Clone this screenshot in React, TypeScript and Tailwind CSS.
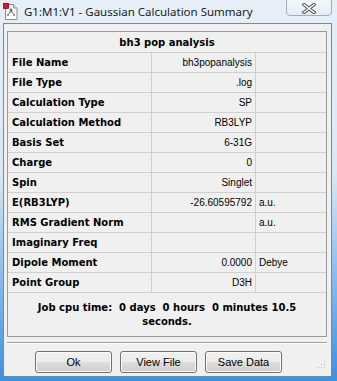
import React from 'react'

const rows = [
  { label: 'File Name', value: 'bh3popanalysis', unit: '' },
  { label: 'File Type', value: '.log', unit: '' },
  { label: 'Calculation Type', value: 'SP', unit: '' },
  { label: 'Calculation Method', value: 'RB3LYP', unit: '' },
  { label: 'Basis Set', value: '6-31G', unit: '' },
  { label: 'Charge', value: '0', unit: '' },
  { label: 'Spin', value: 'Singlet', unit: '' },
  { label: 'E(RB3LYP)', value: '-26.60595792', unit: 'a.u.' },
  { label: 'RMS Gradient Norm', value: '', unit: 'a.u.' },
  { label: 'Imaginary Freq', value: '', unit: '' },
  { label: 'Dipole Moment', value: '0.0000', unit: 'Debye' },
  { label: 'Point Group', value: 'D3H', unit: '' },
]

const GaussIcon = () => (
  <svg width="16" height="17" viewBox="0 0 16 17">
    <path d="M2.5 1.5h8l3.5 3.5v11.5h-11.5z" fill="#fff" stroke="#8c8c8c" />
    <path d="M10.5 1.5v3.5h3.5" fill="#e6e6e6" stroke="#8c8c8c" />
    <line x1="8" y1="7" x2="5" y2="12" stroke="#777" strokeWidth="1" />
    <line x1="8" y1="7" x2="11" y2="12" stroke="#777" strokeWidth="1" />
    <line x1="8" y1="7" x2="8" y2="10" stroke="#777" strokeWidth="1" />
    <circle cx="8" cy="7" r="1.4" fill="#6b6b6b" />
    <circle cx="5" cy="12" r="1.2" fill="#9a9a9a" />
    <circle cx="11" cy="12" r="1.2" fill="#9a9a9a" />
    <rect x="0" y="0" width="5.5" height="5.5" fill="#e0141e" stroke="#8a0a10" strokeWidth="0.8" />
  </svg>
)

const Btn = ({ children }: { children: React.ReactNode }) => (
  <button className="w-[77px] h-[22px] rounded-[3px] border border-[#707070] bg-[linear-gradient(to_bottom,#f2f2f2_0%,#ebebeb_48%,#dddddd_52%,#cfcfcf_100%)] text-[11px] text-black shadow-[inset_0_0_0_1px_#fcfcfc]">
    {children}
  </button>
)

export default function App() {
  return (
    <div className="relative w-[337px] h-[381px] overflow-hidden bg-[linear-gradient(to_bottom,#e6eff8_0%,#dbe8f4_45%,#8ec0ec_70%,#3f8fdc_100%)] font-['Liberation_Sans',Arial,sans-serif]">
      {/* title bar */}
      <div className="flex items-center h-[23px] pl-[3px]">
        <GaussIcon />
        <span className="ml-[5px] text-[11.5px] text-[#1b1b1b] font-['Noto_Sans',sans-serif] leading-none">
          G1:M1:V1 - Gaussian Calculation Summary
        </span>
      </div>
      <div className="absolute top-[-2px] right-[5px] w-[46px] h-[18px] rounded-b-[4px] border border-[#9fadbd] bg-[linear-gradient(to_bottom,#f4f8fb,#e3ecf4)] flex items-center justify-center">
        <svg width="14" height="11" viewBox="0 0 14 11" className="mt-[2px]">
          <path d="M2 1.5L12 9.5M12 1.5L2 9.5" stroke="#4a4a4a" strokeWidth="3.4" strokeLinecap="square" />
          <path d="M2 1.5L12 9.5M12 1.5L2 9.5" stroke="#ffffff" strokeWidth="1.6" strokeLinecap="square" />
        </svg>
      </div>

      {/* client area */}
      <div className="relative ml-[3px] w-[329px] h-[354px] border border-[#7d8b99] bg-[#f0f0f0]">
        <div className="ml-[3px] mt-[7px] w-[320px] border border-[#9a9a9a]">
          <div className="h-[21px] flex items-center justify-center border-b border-[#d0d0d0] text-[10px] font-bold font-['DejaVu_Sans',sans-serif] text-black">
            bh3 pop analysis
          </div>
          {rows.map((r) => (
            <div
              key={r.label}
              className="grid grid-cols-[144px_104px_1fr] h-[20px] border-b border-[#d0d0d0] text-black"
            >
              <div className="flex items-center pl-[4px] border-r border-[#d0d0d0] text-[10px] font-bold font-['DejaVu_Sans',sans-serif]">
                {r.label}
              </div>
              <div className="flex items-center justify-end pr-[3px] border-r border-[#d0d0d0] text-[10px]">
                {r.value}
              </div>
              <div className="flex items-center pl-[3px] text-[10px]">{r.unit}</div>
            </div>
          ))}
          <div className="h-[43px] pt-[8px] text-center text-[10px] leading-[14px] font-bold font-['DejaVu_Sans',sans-serif] text-black whitespace-pre">
            {'Job cpu time:  0 days  0 hours  0 minutes 10.5\nseconds.'}
          </div>
        </div>
        <div className="ml-[3px] mt-[5px] w-[320px] h-[2px] border-t border-[#a0a0a0] border-b border-b-white" />
        <div className="flex gap-[8px] pl-[31px] mt-[7px]">
          <Btn>Ok</Btn>
          <Btn>View File</Btn>
          <Btn>Save Data</Btn>
        </div>
        <svg className="absolute right-[5px] bottom-[7px]" width="9" height="9" viewBox="0 0 9 9">
          <rect x="7" y="1" width="1" height="1" fill="#b8b8b8" />
          <rect x="4" y="4" width="1" height="1" fill="#b8b8b8" />
          <rect x="7" y="4" width="1" height="1" fill="#b8b8b8" />
          <rect x="1" y="7" width="1" height="1" fill="#b8b8b8" />
          <rect x="4" y="7" width="1" height="1" fill="#b8b8b8" />
          <rect x="7" y="7" width="1" height="1" fill="#b8b8b8" />
        </svg>
      </div>
    </div>
  )
}
